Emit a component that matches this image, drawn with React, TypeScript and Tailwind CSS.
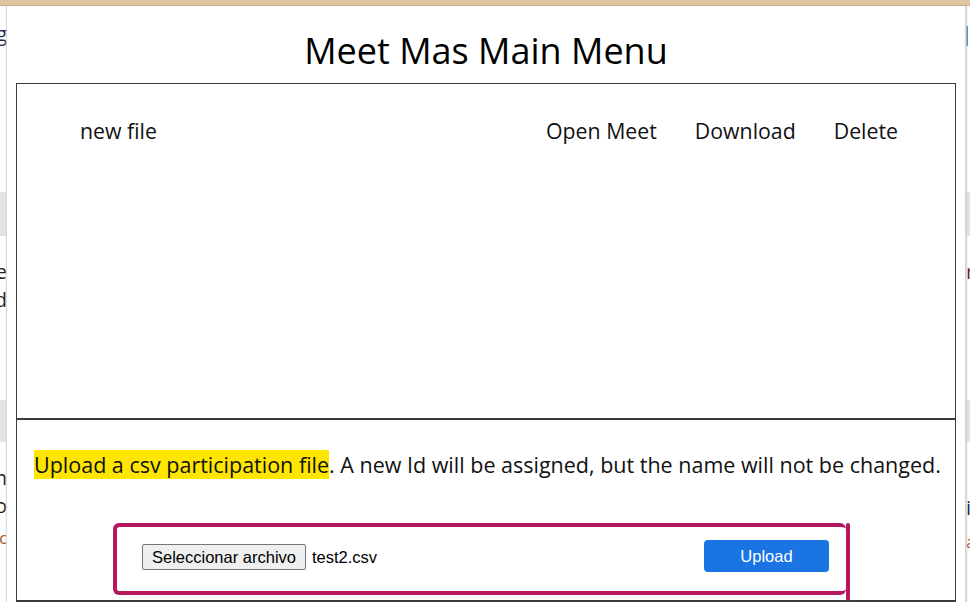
import React from 'react';

const bodyFont = { fontFamily: '"Open Sans", "Noto Sans", sans-serif' };

// strip of the page lying behind the modal, clipped at the sides
function BackStrip({ side }: { side: 'left' | 'right' }) {
  const left = side === 'left';
  return (
    <div className={`relative h-full overflow-hidden bg-white ${left ? 'w-[7px]' : 'w-[5px] border-l border-[#d4d4d4]'}`} style={bodyFont}>
      <div className="absolute left-0 right-0 top-[186px] h-[44px] bg-[#e3e3e3]" />
      <div className="absolute left-0 right-0 top-[394px] h-[42px] bg-[#e3e3e3]" />
      {left ? (
        <>
          <span className="absolute right-[0px] top-[18px] text-[20px] leading-none text-[#1b2a4a]">g</span>
          <span className="absolute right-[0px] top-[256px] text-[20px] leading-none text-[#222]">e</span>
          <span className="absolute right-[0px] top-[284px] text-[20px] leading-none text-[#222]">d</span>
          <span className="absolute right-[0px] top-[462px] text-[20px] leading-none text-[#222]">m</span>
          <span className="absolute right-[0px] top-[490px] text-[20px] leading-none text-[#222]">o</span>
          <span className="absolute right-[0px] top-[524px] text-[16px] leading-none text-[#a0522d]">c</span>
        </>
      ) : (
        <>
          <span className="absolute left-[0px] top-[20px] h-[20px] w-[2px] bg-[#3a78b8]" />
          <span className="absolute left-[0px] top-[256px] text-[20px] leading-none text-[#7a1f1f]">r</span>
          <span className="absolute left-[0px] top-[492px] text-[20px] leading-none text-[#1b2a4a]">i</span>
          <span className="absolute left-[0px] top-[528px] text-[16px] leading-none text-[#a0522d]">a</span>
        </>
      )}
      <div className={`absolute top-0 bottom-0 w-[2px] ${left ? 'right-0 bg-gradient-to-r from-transparent to-[#d0d0d0]' : 'left-0 bg-gradient-to-l from-transparent to-[#d0d0d0]'}`} />
    </div>
  );
}

export default function App() {
  return (
    <div className="flex h-[602px] w-[970px] flex-col overflow-hidden bg-white">
      {/* browser chrome edge */}
      <div className="h-[6px] shrink-0 border-b border-[#c7a985] bg-[#e1c5a2]" />

      <div className="flex min-h-0 flex-1">
        <BackStrip side="left" />

        {/* modal */}
        <div className="flex w-[958px] flex-col bg-white px-[9px]" style={bodyFont}>
          <h1 className="flex h-[77px] shrink-0 items-center justify-center pt-[12px] text-[36px] font-normal text-black">
            Meet Mas Main Menu
          </h1>

          <div className="flex flex-1 flex-col border-x border-t border-b-2 border-[#3b3b3b]">
            {/* file list */}
            <div className="h-[336px] border-b-2 border-[#3b3b3b] pt-[33px]">
              <div className="flex items-center pl-[63px] pr-[57px] text-[21.3px] leading-[28px] text-[#111]">
                <span>new file</span>
                <div className="ml-auto flex items-center gap-[38px]">
                  <button className="cursor-pointer">Open Meet</button>
                  <button className="cursor-pointer">Download</button>
                  <button className="cursor-pointer">Delete</button>
                </div>
              </div>
            </div>

            {/* upload */}
            <div className="flex-1 pt-[31px]">
              <p className="pl-[17px] text-[21.5px] leading-[28px] text-[#111]">
                <span className="bg-[#ffe600]">Upload a csv participation file</span>. A new Id will be assigned, but the name will not be changed.
              </p>

              <div className="relative ml-[96px] mt-[44px] flex h-[72px] w-[733px] items-center rounded-[6px] border-4 border-r-0 border-[#b5185f] pl-[25px] pr-[17px]">
                <div className="flex items-center gap-[6px] pb-[4px]" style={{ fontFamily: '"Liberation Sans", Arial, sans-serif' }}>
                  <button className="h-[26px] rounded-[2px] border border-[#767676] bg-[#efefef] px-[9px] text-[16.5px] text-black">
                    Seleccionar archivo
                  </button>
                  <span className="text-[16.5px] text-black">test2.csv</span>
                </div>
                <button
                  className="ml-auto mb-[6px] h-[32px] w-[125px] rounded-[4px] bg-[#1b74e4] text-[16.5px] text-white"
                  style={{ fontFamily: '"Liberation Sans", Arial, sans-serif' }}
                >
                  Upload
                </button>
                {/* hand-drawn right edge of the annotation */}
                <div className="absolute -right-[4px] -top-[4px] h-[78px] w-[4px] rounded-[2px] bg-[#b5185f]" />
              </div>
            </div>
          </div>
        </div>

        <BackStrip side="right" />
      </div>
    </div>
  );
}
